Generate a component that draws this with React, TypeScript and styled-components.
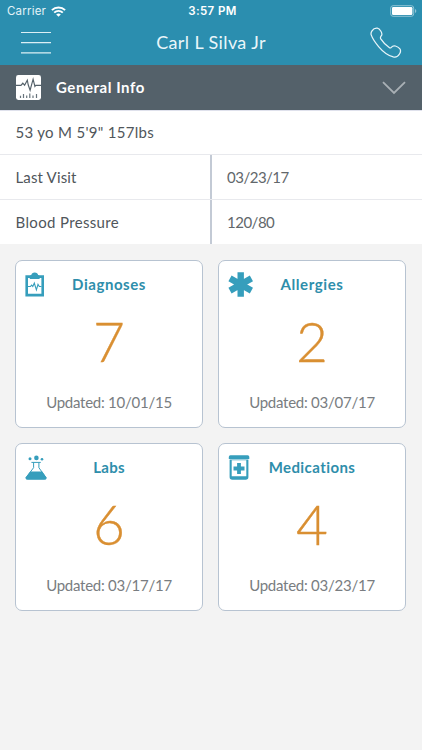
import React from "react";
import styled, { createGlobalStyle } from "styled-components";

const GlobalStyle = createGlobalStyle`
  * { box-sizing: border-box; }
  body {
    margin: 0;
    background: #f3f3f3;
    font-family: Lato, "Open Sans", sans-serif;
    color: #50565b;
  }
`;

const Screen = styled.div`
  min-height: 750px;
  background: #f3f3f3;
`;

const Header = styled.header`
  height: 65px;
  background: #2b8eaf;
  color: #fff;
`;

const StatusBar = styled.div`
  height: 21px;
  display: grid;
  grid-template-columns: 1fr auto 1fr;
  align-items: center;
  padding: 1px 5px 0 7px;
  font-family: Inter, "Liberation Sans", sans-serif;
  font-size: 11.5px;
  line-height: 20px;
`;

const Carrier = styled.div`
  display: flex;
  align-items: center;
  gap: 5px;
  letter-spacing: 0.2px;
  color: #e3f3f8;
`;

const Clock = styled.div`
  padding-left: 1px;
  font-weight: 600;
  letter-spacing: 0.4px;
`;

const Battery = styled.div`
  display: flex;
  justify-content: flex-end;
`;

const NavBar = styled.div`
  height: 44px;
  display: grid;
  grid-template-columns: 60px 1fr 60px;
  align-items: center;
  padding: 0 20px;
`;

const Title = styled.h1`
  margin: 0;
  text-align: center;
  font-size: 18px;
  font-weight: 400;
  line-height: 43px;
  height: 44px;
  letter-spacing: 0.38px;
  color: #eaf6fa;
`;

const PhoneSlot = styled.div`
  display: flex;
  justify-content: flex-end;
`;

const SectionBar = styled.div`
  height: 45px;
  display: flex;
  align-items: center;
  padding: 0 16px 0 16px;
  background: #54616a;
`;

const SectionTitle = styled.h2`
  flex: 1;
  margin: 0 0 2px 15px;
  font-size: 15px;
  font-weight: 700;
  letter-spacing: 0.55px;
  color: #fff;
`;

const Info = styled.div`
  background: #fff;
  font-size: 15px;
  line-height: 45px;
  letter-spacing: 0.37px;
`;

const Summary = styled.div`
  height: 44px;
  padding-left: 15.5px;
  line-height: 42px;
  border-top: 1px solid #dfe1ec;
  letter-spacing: 0.3px;
`;

const Row = styled.div`
  height: 45px;
  display: grid;
  grid-template-columns: 212px 1fr;
  grid-template-rows: 44px;
  border-top: 1px solid #e8e9ed;
`;

const Label = styled.div`
  padding-left: 15.5px;
  border-right: 2px solid #c3cad5;
`;

const LabelText = styled.span<{ $spacing: number }>`
  letter-spacing: ${(p) => p.$spacing}px;
`;

const Value = styled.div`
  padding-left: 15px;
  letter-spacing: -0.5px;
  color: #62676b;
`;

const Cards = styled.div`
  display: grid;
  grid-template-columns: 188px 188px;
  grid-auto-rows: 168px;
  gap: 15px;
  padding: 16px 15px 15px;
`;

const Card = styled.section`
  display: flex;
  flex-direction: column;
  background: #fff;
  border: 1px solid #b7c3d1;
  border-radius: 7px;
`;

const CardHead = styled.div`
  height: 46px;
  display: grid;
  grid-template-columns: 26px 1fr 26px;
  align-items: center;
  padding: 0 9px;
`;

const CardTitle = styled.h3<{ $spacing: number }>`
  margin: 0;
  text-align: center;
  font-size: 15px;
  font-weight: 700;
  letter-spacing: ${(p) => p.$spacing}px;
  color: #2e8eab;
`;

const Count = styled.div`
  height: 70px;
  text-align: center;
  font-size: 55px;
  font-weight: 300;
  line-height: 68px;
  -webkit-text-stroke: 0.35px #d98f32;
  color: #d98f32;
`;

const Updated = styled.div`
  height: 50px;
  text-align: center;
  font-size: 15px;
  line-height: 50px;
  letter-spacing: -0.25px;
  color: #797d81;
`;

const teal = "#369ebc";

const WifiIcon = () => (
  <svg width="15" height="11" viewBox="0 0 15 11" fill="none" stroke="#fff" strokeWidth="1.9">
    <path d="M0.9 4.2a9.3 9.3 0 0 1 13.2 0" />
    <path d="M3.2 6.6a6.1 6.1 0 0 1 8.6 0" />
    <path d="M7.5 10.8 5.2 8.5a3.3 3.3 0 0 1 4.6 0Z" fill="#fff" stroke="none" />
  </svg>
);

const BatteryIcon = () => (
  <svg width="27" height="12" viewBox="0 0 27 12">
    <rect x="0.7" y="0.7" width="23" height="10.6" rx="2.4" fill="none" stroke="#8fc4d6" />
    <rect x="2" y="2" width="20.4" height="8" rx="1.2" fill="#fff" />
    <path d="M25 4v4q1.3-.6 1.3-2T25 4Z" fill="#8fc4d6" />
  </svg>
);

const MenuIcon = () => (
  <svg width="32" height="24" viewBox="0 0 32 24" stroke="#dceff5" strokeWidth="1.2">
    <path d="M1 1.500h30M1 11.700h30M1 21.900h30" />
  </svg>
);

const PhoneIcon = () => (
  <svg width="32" height="32" viewBox="0 0 32 32" fill="none" stroke="#e8f5f9" strokeWidth="1.25">
    <path d="M2 3.800C3.200 2 5.400 1 7.300 1.200c1.600.2 2.600 1.400 3.600 3.100 1.100 1.800 1.500 3 .5 4.400-.9 1.300-1.500 1.700-.6 3.200 2.300 3.600 5.600 6.700 8.400 8.700.8.600 1.400.5 2.100-.3 1-1.200 2.200-1.900 4.100-1.300 1.500.5 3.300 1.500 4.300 2.700 1.300 1.500.9 3.500-.2 5.300-1.300 2.200-3.700 3.500-6.200 2.900C18 28.500 12.500 24.200 8.800 19.800 5.200 15.600 2.500 11.700 1.200 7.900.700 6.400 1.100 5.100 2 3.800Z" />
  </svg>
);

const MonitorIcon = () => (
  <svg width="25" height="25" viewBox="0 0 25 25">
    <rect width="25" height="25" rx="2.4" fill="#fff" />
    <path d="M0 10.400h5l1.800-2.200 1.800 2 2.700-5 .9 4.600 1.900 5.400 3-11 1.800 7.200.8-1H25" fill="none" stroke="#54616a" strokeWidth="1.150" />
    <path d="M4.500 23v-2.200M7.500 23v-4M10.700 23v-2.500M13.800 23v-4.500M17 23v-2.500M20.500 23v-4" stroke="#68747c" strokeWidth="1.200" />
  </svg>
);

const ChevronIcon = () => (
  <svg width="24" height="14" viewBox="0 0 24 14" fill="none" stroke="#a9b0b5" strokeWidth="1.800">
    <path d="M1 1.200 12 12 23 1.200" />
  </svg>
);

const ClipboardIcon = () => (
  <svg width="25" height="25" viewBox="0 0 25 25">
    <path d="M.4 3.300H19V24.600H.4ZM3 6V21.700H16.400V6Z" fill={teal} fillRule="evenodd" />
    <path d="M4.800 7V4.500Q4.800 3.300 6.300 3.100 6.700.5 9.700.5t3.400 2.600q1.500.2 1.500 1.400V7Z" fill={teal} />
    <path d="M3 14.500h2.400l1.200-1.400 1.200 1.300 1.500-3.300 2.100 6.700 1.600-5.500 1.300 2.200h2.200" fill="none" stroke={teal} strokeWidth="1.100" />
  </svg>
);

const AsteriskIcon = () => (
  <svg width="25" height="25" viewBox="0 0 25 25" stroke={teal} strokeWidth="6.400">
    <path d="M12.700.2v24.600M2 6.400l21.400 12.200M23.400 6.400 2 18.600" />
  </svg>
);

const FlaskIcon = () => (
  <svg width="25" height="25" viewBox="0 0 25 25" fill={teal}>
    <circle cx="11.400" cy="2.900" r="2.300" />
    <circle cx="5" cy="3.700" r="1.500" />
    <circle cx="17" cy="4.200" r="1.300" />
    <path d="M6.400 7.400h9.400M8.600 7.400v5.300L1.200 22.400q-.5 1.700 1.200 1.700h17.300q1.700 0 1.200-1.700l-7-9.700V7.400" fill="none" stroke={teal} strokeWidth="1" />
    <path d="M5.200 16.500h12l4 5.700q.8 2.400-1.500 2.400H2.400Q.2 24.600.9 22.200Z" />
  </svg>
);

const PillBottleIcon = () => (
  <svg width="25" height="25" viewBox="0 0 25 25" fill={teal}>
    <path d="M2.400.3h17.300q1.600 0 1.600 1.700v1.900H.8V2Q.8.300 2.400.3Z" />
    <path d="M1.600 4.600H20.400V22q0 2.700-2.700 2.700H4.300Q1.600 24.700 1.600 22ZM3.700 5.200V21.300H18.300V5.200Z" fillRule="evenodd" />
    <path d="M9.100 8.100h3.800V11.600h3.600v3.800h-3.600v3.600H9.100v-3.600H5.500V11.600h3.600Z" />
  </svg>
);

const cards = [
  { title: "Diagnoses", count: 7, date: "10/01/15", spacing: 0.55, Icon: ClipboardIcon },
  { title: "Allergies", count: 2, date: "03/07/17", spacing: 0.6, Icon: AsteriskIcon },
  { title: "Labs", count: 6, date: "03/17/17", spacing: 0.3, Icon: FlaskIcon },
  { title: "Medications", count: 4, date: "03/23/17", spacing: 0.42, Icon: PillBottleIcon },
];

export default function App() {
  return (
    <Screen>
      <GlobalStyle />
      <Header>
        <StatusBar>
          <Carrier>
            Carrier
            <WifiIcon />
          </Carrier>
          <Clock>3:57 PM</Clock>
          <Battery>
            <BatteryIcon />
          </Battery>
        </StatusBar>
        <NavBar>
          <MenuIcon />
          <Title>Carl L Silva Jr</Title>
          <PhoneSlot>
            <PhoneIcon />
          </PhoneSlot>
        </NavBar>
      </Header>
      <SectionBar>
        <MonitorIcon />
        <SectionTitle>General Info</SectionTitle>
        <ChevronIcon />
      </SectionBar>
      <Info>
        <Summary>53 yo M 5'9" 157lbs</Summary>
        <Row>
          <Label>
            <LabelText $spacing={0.15}>Last Visit</LabelText>
          </Label>
          <Value>03/23/17</Value>
        </Row>
        <Row>
          <Label>
            <LabelText $spacing={0.35}>Blood Pressure</LabelText>
          </Label>
          <Value>120/80</Value>
        </Row>
      </Info>
      <Cards>
        {cards.map(({ title, count, date, spacing, Icon }) => (
          <Card key={title}>
            <CardHead>
              <Icon />
              <CardTitle $spacing={spacing}>{title}</CardTitle>
            </CardHead>
            <Count>{count}</Count>
            <Updated>Updated: {date}</Updated>
          </Card>
        ))}
      </Cards>
    </Screen>
  );
}
